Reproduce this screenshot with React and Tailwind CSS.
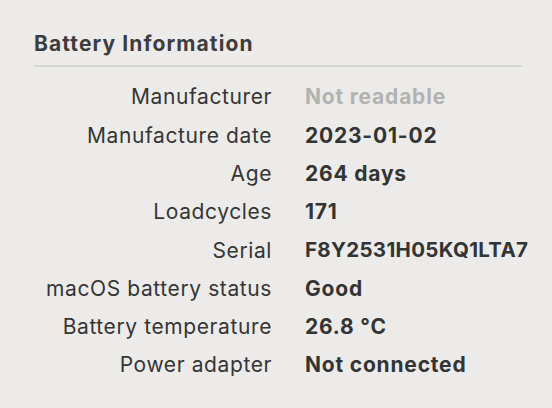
import React from 'react';

const rows = [
  { label: 'Manufacturer', value: 'Not readable', muted: true },
  { label: 'Manufacture date', value: '2023-01-02' },
  { label: 'Age', value: '264 days' },
  { label: 'Loadcycles', value: '171' },
  { label: 'Serial', value: 'F8Y2531H05KQ1LTA7', tight: true },
  { label: 'macOS battery status', value: 'Good' },
  { label: 'Battery temperature', value: '26.8 °C' },
  { label: 'Power adapter', value: 'Not connected' },
];

export default function App() {
  return (
    <div
      className="w-[552px] h-[408px] bg-[#ecebe9] overflow-hidden"
      style={{ fontFamily: 'Inter, "Noto Sans", sans-serif' }}
    >
      <div className="pl-[34px] pr-[30px] pt-[30px]">
        {/* Section header */}
        <h2 className="text-[21px] leading-[28px] font-bold tracking-[1.1px] text-[#3d3d3d]">
          Battery Information
        </h2>
        <div className="mt-[7px] h-[2px] bg-[#d7d7d6]" />

        {/* Info rows */}
        <div className="mt-[11px] grid grid-cols-[238px_1fr] gap-x-[33px]">
          {rows.map((row) => (
            <React.Fragment key={row.label}>
              <div className="h-[38.3px] flex items-center justify-end text-[21px] tracking-[0.6px] text-[#353535]">
                {row.label}
              </div>
              <div
                className={`h-[38.3px] flex items-center font-bold ${
                  row.tight ? 'text-[20.5px] tracking-[0.3px]' : 'text-[21px] tracking-[0.8px]'
                } ${row.muted ? 'text-[#b2b2b1]' : 'text-[#343434]'}`}
              >
                {row.value}
              </div>
            </React.Fragment>
          ))}
        </div>
      </div>
    </div>
  );
}
